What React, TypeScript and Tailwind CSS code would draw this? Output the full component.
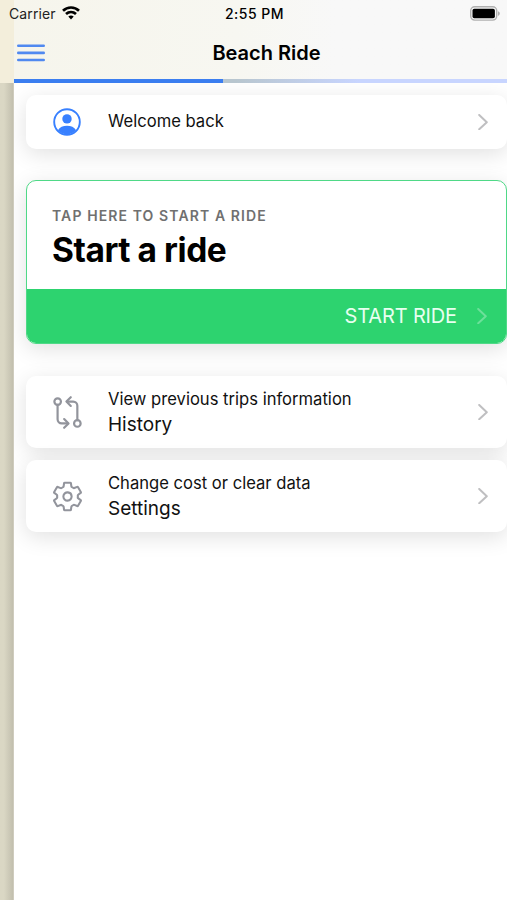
import type { ReactNode } from 'react';
import { IoGitCompareOutline, IoSettingsOutline } from 'react-icons/io5';

function Chevron({ className }: { className: string }) {
    return (
        <svg viewBox="0 0 10 16" className={`w-2.5 h-4 shrink-0 ${className}`} fill="none" stroke="currentColor" strokeWidth="2">
            <path d="M1.2 1 8.8 8.2 1.2 15.2" strokeLinecap="round" strokeLinejoin="round" />
        </svg>
    );
}

function PersonIcon() {
    return (
        <svg viewBox="0 0 28 28" className="w-7 h-7 text-[#3880ff]" fill="none">
            <circle cx="14" cy="14" r="12.8" stroke="currentColor" strokeWidth="1.9" />
            <circle cx="14" cy="10.9" r="4.7" fill="currentColor" />
            <path d="M4.9 22.2C6.7 19 10 17.7 14 17.7s7.3 1.3 9.1 4.5A12.5 12.5 0 0 1 14 26.3a12.5 12.5 0 0 1-9.1-4.1Z" fill="currentColor" />
        </svg>
    );
}

function StatusBar() {
    return (
        <div className="grid grid-cols-3 items-center h-[27px] pl-[9px] pr-[7px]">
            <div className="flex items-center gap-[6px] text-[14px] tracking-[0.1px] text-[#222]">
                <span>Carrier</span>
                <svg viewBox="0 0 18 14" className="w-[18px] h-[14px] -mt-px" fill="none" stroke="#000" strokeWidth="2.7">
                    <path d="M1 4.7C5.5.4 12.5.4 17 4.7" />
                    <path d="M4 8.1c2.9-2.6 7.1-2.6 10 0" />
                    <path d="M6.3 10.5c1.6-1.4 3.8-1.4 5.4 0L9 13.4Z" fill="#000" stroke="none" />
                </svg>
            </div>
            <div className="text-center text-[14px] font-medium tracking-[0.5px] text-black whitespace-nowrap">2:55 PM</div>
            <div className="flex justify-end">
                <svg viewBox="0 0 30 15" className="w-[30px] h-[15px] -mt-px">
                    <rect x=".7" y=".7" width="26" height="13.4" rx="4" fill="#f8f8f8" stroke="#b0b0b0" strokeWidth="1.4" />
                    <rect x="2.5" y="2.8" width="22.4" height="9.4" rx="1.8" fill="#000" />
                    <path d="M28 5.2c2.4.8 2.4 3.8 0 4.6Z" fill="#b0b0b0" />
                </svg>
            </div>
        </div>
    );
}

function Header() {
    return (
        <header className="flex h-[83px]">
            <div className="w-[14px] shrink-0 bg-[#f3eedb]" />
            <div className="flex-1 flex flex-col bg-linear-to-r from-[#f6f5ec] via-[#f7f7f1] via-45% to-[#f8f8f8] to-65%">
                <div className="h-[79px] -ml-[14px]">
                    <StatusBar />
                    <div className="grid grid-cols-[1fr_auto_1fr] items-center h-[52px] pl-[17px]">
                        <svg viewBox="0 0 28 18" className="w-7 h-[18px]" stroke="#5089f0" strokeWidth="2.6" strokeLinecap="round">
                            <path d="M1.3 1.8h25.4M1.3 8.9h25.4M1.3 16h25.4" />
                        </svg>
                        <h1 className="text-[20px] font-semibold text-black ml-[9px]">Beach Ride</h1>
                    </div>
                </div>
                {/* Progress */}
                <div className="h-1 bg-linear-to-r from-[#b8c6cf] from-45% to-[#c8d5ff] to-70%">
                    <div className="w-[209px] h-full bg-[#3b7ef0]" />
                </div>
            </div>
        </header>
    );
}

function MenuCard({ icon, title, subtitle }: { icon: ReactNode; title: string; subtitle?: string }) {
    return (
        <div className="flex items-center rounded-[10px] bg-white pl-[26px] pr-[19px] shadow-[0_5px_22px_rgba(0,0,0,0.12)]">
            <div className="flex items-center justify-center w-[30px] shrink-0 text-[#92949c]">{icon}</div>
            <div className={subtitle ? 'flex-1 ml-[26px] pt-[11px] pb-[11px]' : 'flex-1 ml-[26px] pt-[14px] pb-[15px]'}>
                <div className="text-[16.6px] leading-[25px] text-[#111]">{title}</div>
                {subtitle && <div className="text-[19px] leading-[25px] text-[#111]">{subtitle}</div>}
            </div>
            <Chevron className="text-[#bfbfc1]" />
        </div>
    );
}

export default function App() {
    return (
        <div className="flex flex-col w-[507px] h-[900px] overflow-hidden bg-white font-['Inter','Liberation_Sans',sans-serif]">
            <Header />
            <div className="flex flex-1 min-h-0">
                <div className="w-[14px] shrink-0 border-r border-[#cfccbe] bg-linear-to-r from-[#dad7c4] from-30% to-[#c2bfae]" />
                <main className="flex-1 overflow-hidden pl-3 pt-[12px]">
                    <MenuCard icon={<PersonIcon />} title="Welcome back" />

                    {/* Start ride */}
                    <div className="mt-[31px] h-[164px] rounded-[10px] border border-[#4fd987] bg-white overflow-hidden shadow-[0_5px_22px_rgba(0,0,0,0.12)]">
                        <div className="h-[108px] pl-[25px] pt-[26px]">
                            <div className="text-[14px] leading-[18px] font-semibold tracking-[1.1px] text-[#707070]">TAP HERE TO START A RIDE</div>
                            <div className="mt-[4px] text-[33.5px] leading-[42px] font-bold tracking-[-0.45px] text-black">Start a ride</div>
                        </div>
                        <div className="flex items-center justify-end h-[54px] pr-[19px] bg-[#2dd36f] text-[#e7fff0]">
                            <span className="text-[20px] font-normal tracking-[-0.15px]">START RIDE</span>
                            <Chevron className="ml-[20px] text-[#6ce09a]" />
                        </div>
                    </div>

                    <div className="flex flex-col gap-[12px] mt-[32px]">
                        <MenuCard icon={<IoGitCompareOutline className="w-[35px] h-[35px] shrink-0" />} title="View previous trips information" subtitle="History" />
                        <MenuCard icon={<IoSettingsOutline className="w-[33px] h-[33px] shrink-0" />} title="Change cost or clear data" subtitle="Settings" />
                    </div>
                </main>
            </div>
        </div>
    );
}
